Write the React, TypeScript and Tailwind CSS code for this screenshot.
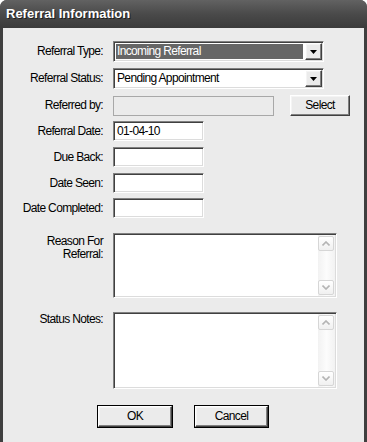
import type { ReactNode } from "react";

const sunken =
  "border border-t-[#808080] border-l-[#808080] border-r-white border-b-white shadow-[inset_1px_1px_0_#404040,inset_-1px_-1px_0_#dcdcdc]";
const raised =
  "border border-t-white border-l-white border-r-[#404040] border-b-[#404040] shadow-[inset_-1px_-1px_0_#808080,inset_1px_1px_0_#f4f4f4]";

function Row({ label, className, children }: { label: string; className?: string; children: ReactNode }) {
  return (
    <div className={`flex items-center ${className ?? ""}`}>
      <div className="w-[100px] text-right">{label}</div>
      <div className="ml-[10px] flex items-center">{children}</div>
    </div>
  );
}

function Combo({ value, selected }: { value: string; selected?: boolean }) {
  return (
    <div className={`flex h-[21px] w-[211px] bg-white p-[1px] ${sunken}`}>
      <div className="flex flex-1 items-center p-[1px] pr-[2px]">
        <div
          className={`flex h-full flex-1 items-center pl-[1px] ${
            selected ? "bg-[#666666] text-white" : "text-black"
          }`}
        >
          {value}
        </div>
      </div>
      <div className={`flex h-[17px] w-[17px] items-center justify-center bg-[#ebebeb] ${raised}`}>
        <svg width="7" height="4" viewBox="0 0 7 4">
          <path d="M0 0h7L3.5 4z" fill="#000" />
        </svg>
      </div>
    </div>
  );
}

function Field({ width, value, disabled }: { width: string; value?: string; disabled?: boolean }) {
  return (
    <div
      className={`flex h-[20px] items-center pl-[3px] ${width} ${
        disabled ? "border border-[#a8a8a8] bg-[#ebebeb]" : `bg-white ${sunken}`
      }`}
    >
      {value}
    </div>
  );
}

function Chevron({ up }: { up?: boolean }) {
  return (
    <svg width="8" height="5" viewBox="0 0 8 5">
      <path
        d={up ? "M0.5 4.5L4 1l3.5 3.5" : "M0.5 0.5L4 4l3.5-3.5"}
        fill="none"
        stroke="#b4b4b4"
        strokeWidth="1.6"
      />
    </svg>
  );
}

function TextBox({ height }: { height: string }) {
  return (
    <div className={`flex w-[224px] bg-white p-[1px] ${height} ${sunken}`}>
      <div className="flex-1" />
      <div className="flex w-[17px] flex-col bg-gradient-to-r from-[#f2f2f2] via-[#fcfcfc] to-[#f2f2f2] py-[1px] pr-[1px]">
        <div className="flex h-[15px] items-center justify-center rounded-[2px] border border-[#d6d6d6] bg-gradient-to-b from-white to-[#f0f0f0]">
          <Chevron up />
        </div>
        <div className="flex-1" />
        <div className="flex h-[15px] items-center justify-center rounded-[2px] border border-[#d6d6d6] bg-gradient-to-b from-white to-[#f0f0f0]">
          <Chevron />
        </div>
      </div>
    </div>
  );
}

function Button({ label, width, boxed }: { label: string; width: string; boxed?: boolean }) {
  if (boxed) {
    return (
      <div className={`h-[23px] border border-black ${width}`}>
        <div className={`flex h-full items-center justify-center bg-[#ebebeb] ${raised}`}>{label}</div>
      </div>
    );
  }
  return (
    <div className={`flex h-[21px] items-center justify-center bg-[#ebebeb] ${width} ${raised}`}>{label}</div>
  );
}

export default function App() {
  return (
    <div className="h-[442px] w-[367px] bg-white" style={{ fontFamily: '"Liberation Sans", Arial, sans-serif' }}>
      <div className="flex h-full flex-col overflow-hidden rounded-t-[7px] bg-[#3f3f3f]">
        <div className="flex h-[28px] items-center bg-gradient-to-b from-[#626262] via-[#4a4a4a] to-[#3b3b3b] pl-[6px]">
          <span className="text-[13px] font-bold text-white [text-shadow:1px_1px_0_#1e1e1e]">
            Referral Information
          </span>
        </div>
        <div className="mx-[3px] flex flex-1 flex-col bg-[#ebebeb] pt-[13px] text-[12px] leading-[13px] tracking-[-0.65px] text-black">
          <Row label="Referral Type:">
            <Combo value="Incoming Referral" selected />
          </Row>
          <Row label="Referral Status:" className="mt-[6px]">
            <Combo value="Pending Appointment" />
          </Row>
          <Row label="Referred by:" className="mt-[6px]">
            <Field width="w-[161px]" disabled />
            <div className="ml-[16px]">
              <Button label="Select" width="w-[60px]" />
            </div>
          </Row>
          <Row label="Referral Date:" className="mt-[5px]">
            <Field width="w-[91px]" value="01-04-10" />
          </Row>
          <Row label="Due Back:" className="mt-[6px]">
            <Field width="w-[91px]" />
          </Row>
          <Row label="Date Seen:" className="mt-[6px]">
            <Field width="w-[91px]" />
          </Row>
          <Row label="Date Completed:" className="mt-[5px]">
            <Field width="w-[91px]" />
          </Row>
          <div className="mt-[15px] flex">
            <div className="w-[100px] pt-[2px] text-right">
              Reason For
              <br />
              Referral:
            </div>
            <div className="ml-[10px]">
              <TextBox height="h-[65px]" />
            </div>
          </div>
          <div className="mt-[14px] flex">
            <div className="w-[100px] pt-[1px] text-right">Status Notes:</div>
            <div className="ml-[10px]">
              <TextBox height="h-[77px]" />
            </div>
          </div>
          <div className="mt-[16px] flex gap-[21px] pl-[94px]">
            <Button label="OK" width="w-[76px]" boxed />
            <Button label="Cancel" width="w-[75px]" boxed />
          </div>
        </div>
      </div>
    </div>
  );
}
